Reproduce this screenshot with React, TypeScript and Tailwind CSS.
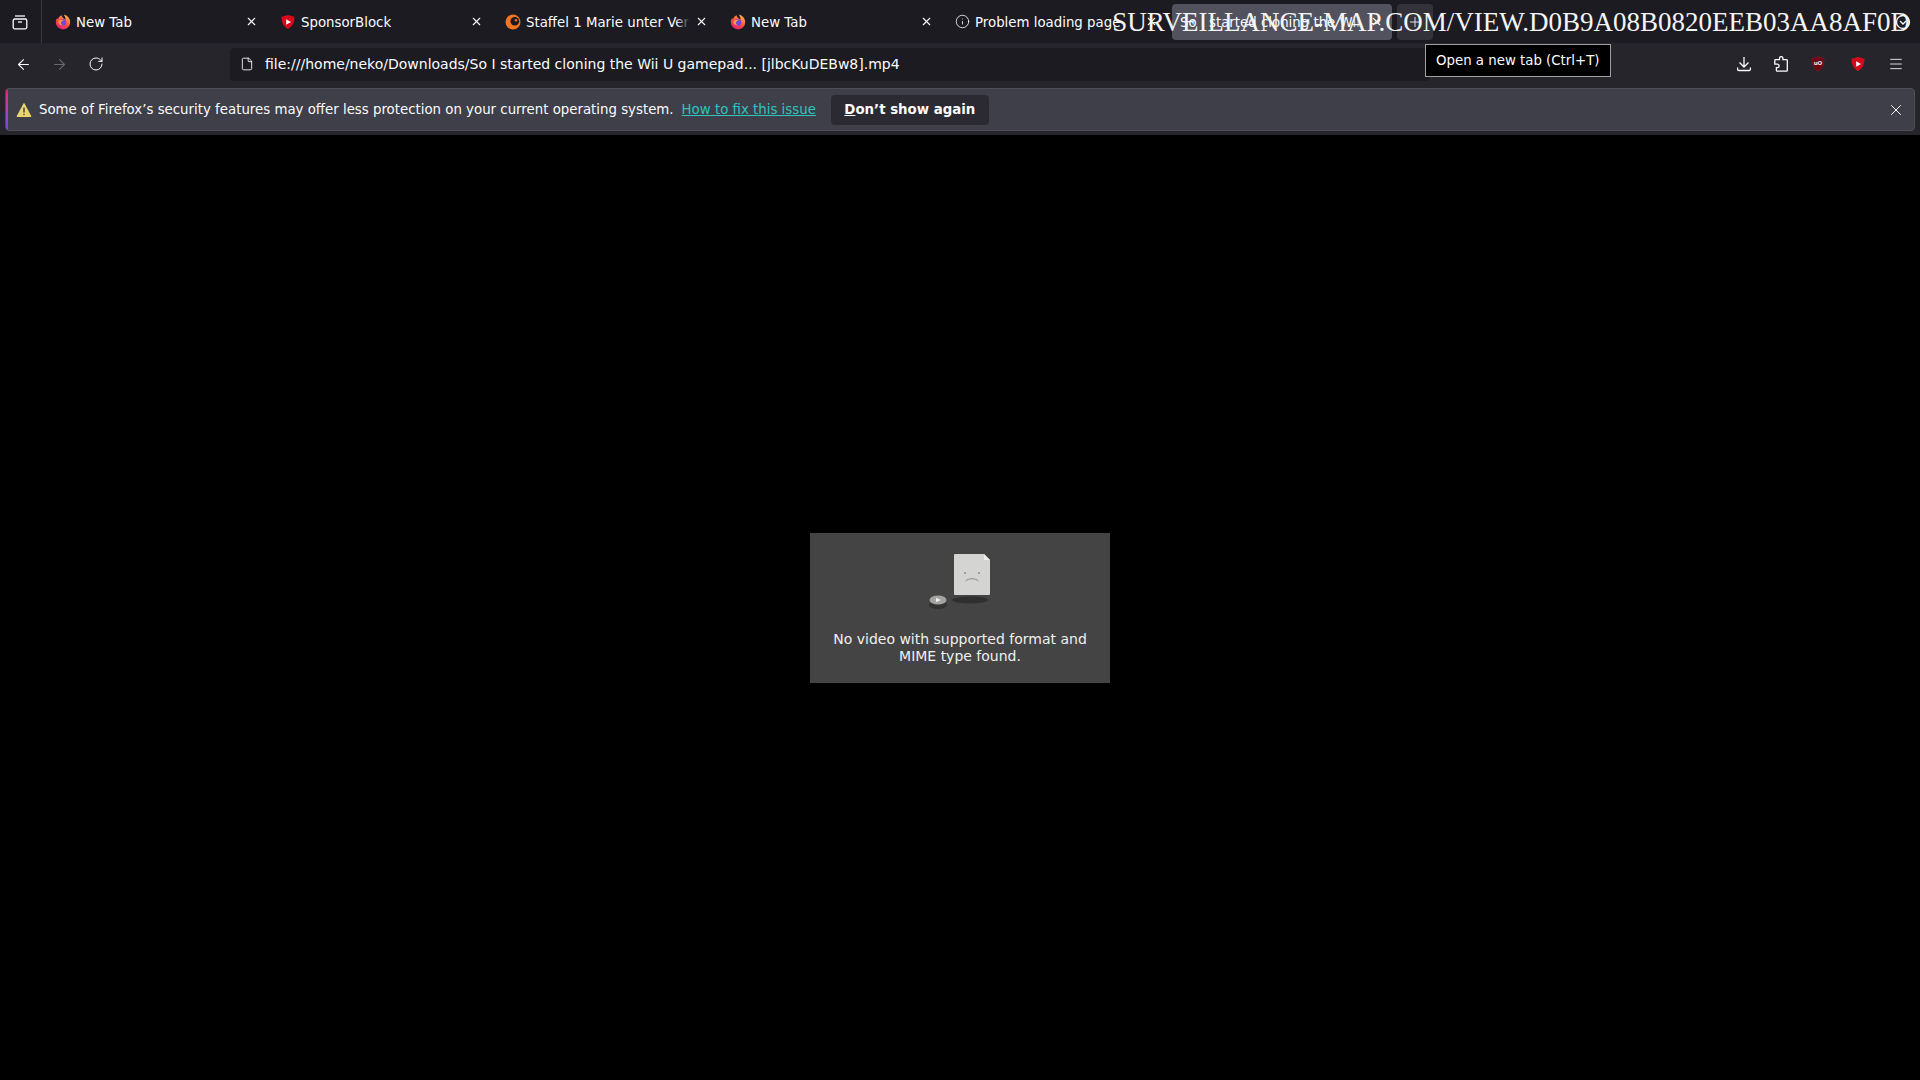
import React from "react";
import { ArrowLeft, ArrowRight, File, Info, Menu, Plus, RotateCw, X } from "lucide-react";

function FirefoxLogo() {
  return (
    <svg width="16" height="16" viewBox="0 0 16 16" className="shrink-0">
      <defs>
        <linearGradient id="ffBody" x1="0.8" y1="0" x2="0.2" y2="1">
          <stop offset="0" stopColor="#ffbd4f" />
          <stop offset="0.5" stopColor="#ff5634" />
          <stop offset="1" stopColor="#e31587" />
        </linearGradient>
      </defs>
      <path d="M8 15.500A7.200 7.200 0 0 1 .8 8.200c0-1.600.5-3 1.400-4.200.2.600.5 1 .9 1.300C3.600 3 5.200 1.800 7 1.600c-.3 1 .1 1.700 1 2.300 1.600 1 2.400 1.500 2.700 1.700-.2-1.600-.8-3.300-1.900-5.100 3.500 1 6.400 3.800 6.400 7.700A7.200 7.200 0 0 1 8 15.500z" fill="url(#ffBody)" />
      <circle cx="8" cy="8.500" r="3.200" fill="#7542e5" />
      <path d="M4 6.500c1.500-.8 3.500-.6 5 .4-1.500 0-2.600.4-3 1.500-.3 1.300.8 2.600 2.500 2.600-2.500 1-4.800-.6-5.200-2.500-.1-.7.200-1.500.7-2z" fill="#ff9640" />
    </svg>
  );
}

function ShieldLogo({ size = 16 }: { size?: number }) {
  return (
    <svg width={size} height={size} viewBox="0 0 16 16" className="shrink-0">
      <path d="M8 1l6.500 1.800c0 5.700-1.800 9.800-6.500 12.200C3.300 12.600 1.500 8.500 1.500 2.800z" fill="#d5091c" />
      <path d="M6.200 5.300L11 8l-4.800 2.700z" fill="#ffffff" />
    </svg>
  );
}

function CrunchyLogo() {
  return (
    <svg width="16" height="16" viewBox="0 0 16 16" className="shrink-0">
      <circle cx="8" cy="8" r="7.500" fill="#f47521" />
      <circle cx="9.800" cy="7.300" r="4.300" fill="#1b1a20" />
      <circle cx="11" cy="6.300" r="1.300" fill="#f47521" />
    </svg>
  );
}

function UblockLogo() {
  return (
    <svg width="16" height="16" viewBox="0 0 16 16" className="shrink-0">
      <path d="M8 1l6 1.800c0 5.700-1.600 9.800-6 12.200C3.600 12.600 2 8.500 2 2.800z" fill="#6e0713" stroke="#a50d1c" strokeWidth="0.600" />
      <text x="8" y="8.800" textAnchor="middle" fontSize="5.500" fontWeight="700" fill="#f2e6e6" fontFamily="'DejaVu Sans', sans-serif">
        uO
      </text>
    </svg>
  );
}

function ViewIcon() {
  return (
    <svg width="16" height="16" viewBox="0 0 16 16" fill="none" stroke="#fbfbfe" strokeWidth="1.300">
      <rect x="1.200" y="5" width="13.600" height="9.800" rx="1.500" />
      <path d="M3 2h10" />
      <path d="M6 8h4" />
    </svg>
  );
}

function DownloadIcon() {
  return (
    <svg width="16" height="16" viewBox="0 0 16 16" fill="none" stroke="#fbfbfe" strokeWidth="1.300" className="shrink-0">
      <path d="M8 1v9.500M3.500 6.500L8 11l4.500-4.500" />
      <path d="M1.600 11.500v1.800a1.200 1.200 0 0 0 1.200 1.200h10.400a1.200 1.200 0 0 0 1.200-1.200v-1.800" />
    </svg>
  );
}

function ExtensionIcon() {
  return (
    <svg width="16" height="16" viewBox="0 0 16 16" fill="none" stroke="#fbfbfe" strokeWidth="1.300" className="shrink-0">
      <path d="M6.500 3.200V2.300a1.700 1.700 0 0 1 3.400 0v1.400h3.600a.8.8 0 0 1 .8.8v9.900a.8.8 0 0 1-.8.8H4.200a.8.8 0 0 1-.8-.8v-2.800h1a1.700 1.700 0 0 0 0-3.400H1.800V4.500a.8.8 0 0 1 .8-.8h3.900z" />
    </svg>
  );
}

function SadFile() {
  return (
    <svg width="72" height="64" viewBox="0 0 72 64" fill="none">
      <ellipse cx="43" cy="47" rx="18" ry="3.500" fill="#2f2f2f" />
      <ellipse cx="11" cy="52" rx="9" ry="4" fill="#333333" />
      <path d="M28 1h29l6 6v34a1 1 0 0 1-1 1H28a1 1 0 0 1-1-1V2a1 1 0 0 1 1-1z" fill="#d4d4d2" />
      <path d="M57 1l6 6h-6z" fill="#efefed" />
      <circle cx="38" cy="20" r="1" fill="#8b8b8b" />
      <circle cx="52" cy="20" r="1" fill="#8b8b8b" />
      <path d="M38.500 28c3-3 10-3 13 0" stroke="#8b8b8b" strokeWidth="1" />
      <ellipse cx="11" cy="47" rx="8.500" ry="4.500" fill="#a3a3a1" />
      <path d="M9 45l5 2-5 2z" fill="#f2f2f2" />
    </svg>
  );
}

const tabs = [
  { title: "New Tab", icon: <FirefoxLogo /> },
  { title: "SponsorBlock", icon: <ShieldLogo /> },
  { title: "Staffel 1 Marie unter Verdacht", icon: <CrunchyLogo /> },
  { title: "New Tab", icon: <FirefoxLogo /> },
  { title: "Problem loading page", icon: <Info size={15} color="#fbfbfe" strokeWidth={1.300} className="shrink-0" /> },
  { title: "So I started cloning the Wii U gamepad", active: true },
];

function Tab({ title, icon, active }: { title: string; icon?: React.ReactNode; active?: boolean }) {
  return (
    <div className="w-[225px] h-[36px] pl-[3px] pr-[2px] shrink-0">
      <div className={`h-full flex items-center gap-[5px] pl-[8px] pr-[9px] rounded-[4px] ${active ? "bg-[#52525e]" : ""}`}>
        {icon}
        <div className="relative flex-1 min-w-0 overflow-hidden whitespace-nowrap pt-[2px]">
          {title}
          <div className={`absolute right-0 top-0 bottom-0 w-[14px] bg-gradient-to-r from-transparent ${active ? "to-[#52525e]" : "to-[#1c1b22]"}`} />
        </div>
        <X size={13} strokeWidth={2} color="#fbfbfe" className="shrink-0" />
      </div>
    </div>
  );
}

export default function App() {
  return (
    <div className="min-h-screen flex flex-col bg-black text-[13.33px] text-[#fbfbfe] font-['DejaVu_Sans',sans-serif]">
      <div className="relative h-[44px] flex items-center bg-[#1c1b22] border-b border-[#25242c]">
        <div className="w-[42px] h-full flex items-center justify-center border-r border-[#3a3940] shrink-0 pr-[2px]">
          <ViewIcon />
        </div>
        <div className="flex items-center pl-[2px]">
          {tabs.map((t, i) => (
            <Tab key={i} title={t.title} icon={t.icon} active={t.active} />
          ))}
          <div className="w-[36px] h-[36px] rounded-[4px] bg-[#33323a] flex items-center justify-center ml-[3px]">
            <Plus size={16} strokeWidth={1.300} />
          </div>
        </div>
        <div className="ml-auto pr-[9px] flex items-center">
          <svg width="16" height="16" viewBox="0 0 16 16" fill="none" stroke="#fbfbfe" strokeWidth="1.300">
            <circle cx="8" cy="8" r="6.500" />
            <path d="M5 7l3 3 3-3" />
          </svg>
        </div>
        <div className="absolute right-[10px] top-[3px] text-[27px] leading-[38px] tracking-[0px] whitespace-nowrap text-[#f4f4f4] font-['Liberation_Serif',serif]">
          SURVEILLANCE-MAP.COM/VIEW.D0B9A08B0820EEB03AA8AF0D
        </div>
      </div>

      <div className="relative h-[44px] flex items-center bg-[#26252b] pb-[4px]">
        <div className="w-[230px] flex items-center shrink-0 pl-[15px] gap-[19px]">
          <ArrowLeft size={17} strokeWidth={1.500} />
          <ArrowRight size={17} strokeWidth={1.500} color="#6a6970" />
          <RotateCw size={16} strokeWidth={1.500} className="ml-[1px]" />
        </div>
        <div className="w-[1200px] h-[33px] bg-[#1c1b22] rounded-[4px] flex items-center pl-[10px] gap-[11px] text-[14px]">
          <File size={14} strokeWidth={1.500} />
          <span>file:///home/neko/Downloads/So I started cloning the Wii U gamepad... [jlbcKuDEBw8].mp4</span>
        </div>
        <div className="flex-1 flex items-center justify-end pr-[16px] gap-[21px]">
          <DownloadIcon />
          <ExtensionIcon />
          <div className="flex items-center gap-[24px] mr-[1px]">
            <UblockLogo />
            <ShieldLogo />
          </div>
          <Menu size={16} strokeWidth={1.300} />
        </div>
        <div className="absolute left-[1425px] top-0 h-[33px] px-[10px] flex items-center bg-black border border-[#a0a0a0] whitespace-nowrap">
          Open a new tab (Ctrl+T)
        </div>
      </div>

      <div className="h-[47px] bg-[#26252b] px-[5px] pb-[4px]">
        <div className="relative h-full flex items-center bg-[#3f3f49] rounded-[4px] border border-[#4f4e58] overflow-hidden pl-[10px]">
          <div className="absolute left-0 top-0 bottom-0 w-[2px] bg-gradient-to-b from-[#e31587] to-[#7542e5]" />
          <svg width="16" height="16" viewBox="0 0 16 16" className="shrink-0">
            <path d="M8 1.500l7 13H1z" fill="#ecd66c" stroke="#ecd66c" strokeLinejoin="round" />
            <path d="M8 5.500v5M8 11.800v1.200" stroke="#3a3944" strokeWidth="1.400" />
          </svg>
          <span className="ml-[7px]">Some of Firefox’s security features may offer less protection on your current operating system.</span>
          <span className="ml-[8px] text-[#2fc4bd] underline">How to fix this issue</span>
          <div className="ml-[15px] h-[30px] px-[13.500px] flex items-center bg-[#2b2a33] rounded-[4px] font-bold">
            <span><span className="underline">D</span>on’t show again</span>
          </div>
          <X size={18} strokeWidth={1.300} className="ml-auto mr-[9px]" />
        </div>
      </div>

      <div className="flex-1 flex items-center justify-center">
        <div className="w-[300px] h-[150px] bg-[#444444] flex flex-col items-center">
          <div className="mt-[20px] ml-[6px]">
            <SadFile />
          </div>
          <p className="mt-[14px] w-[270px] text-center leading-[17px] text-[14px] text-[#f0f0f0]">
            No video with supported format and MIME type found.
          </p>
        </div>
      </div>
    </div>
  );
}
